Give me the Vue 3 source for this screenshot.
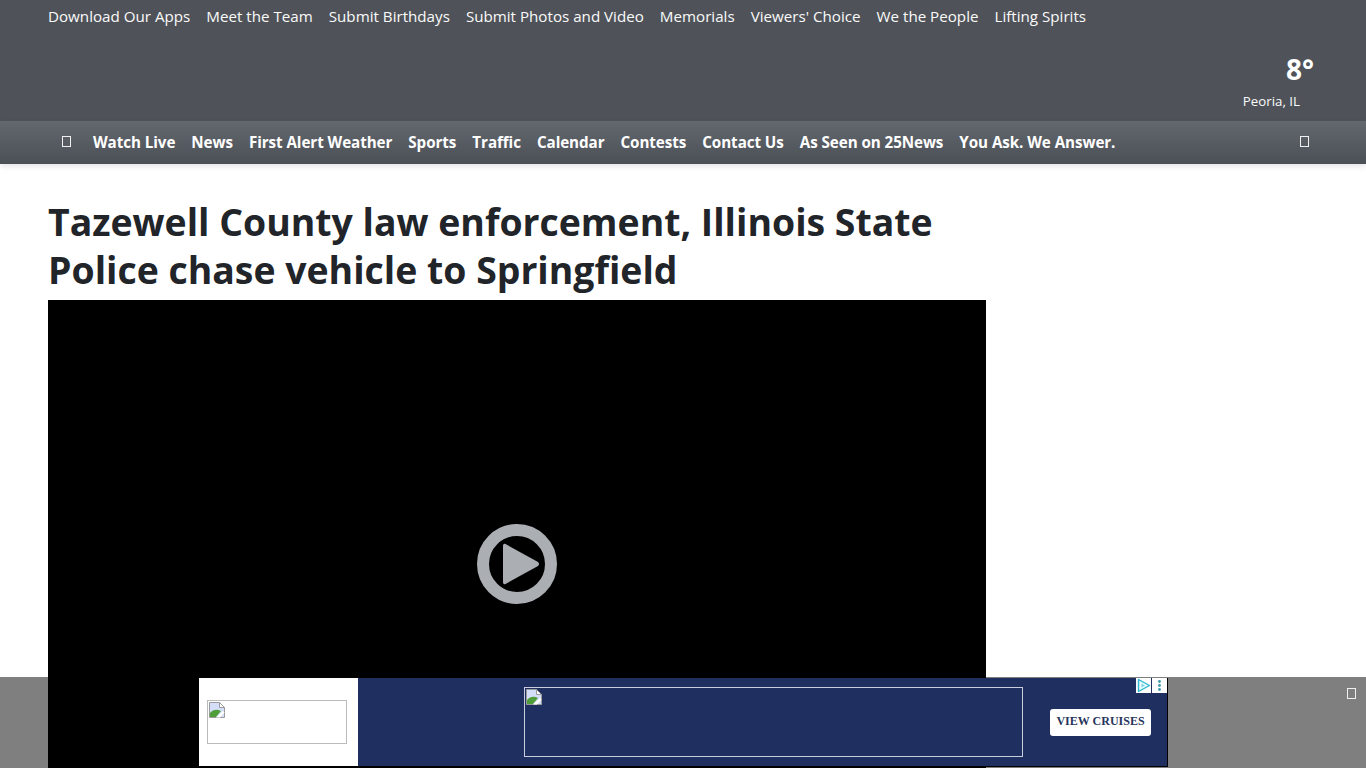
<script setup>
const topLinks = ['Download Our Apps', 'Meet the Team', 'Submit Birthdays', 'Submit Photos and Video', 'Memorials', "Viewers' Choice", 'We the People', 'Lifting Spirits']
const navLinks = ['Watch Live', 'News', 'First Alert Weather', 'Sports', 'Traffic', 'Calendar', 'Contests', 'Contact Us', 'As Seen on 25News', 'You Ask. We Answer.']
</script>

<template>
  <div class="page">
    <header class="masthead">
      <nav class="top-links">
        <a v-for="l in topLinks" :key="l">{{ l }}</a>
      </nav>
      <div class="weather">
        <div class="temp">8°</div>
        <div class="city">Peoria, IL</div>
      </div>
    </header>
    <nav class="mainnav">
      <span class="tofu menu-tofu"></span>
      <a v-for="l in navLinks" :key="l">{{ l }}</a>
      <span class="tofu search-tofu"></span>
    </nav>
    <main class="content">
      <h1>Tazewell County law enforcement, Illinois State Police chase vehicle to Springfield</h1>
      <div class="video">
        <svg class="play" width="80" height="80" viewBox="0 0 80 80">
          <circle cx="40" cy="40" r="34" fill="none" stroke="#abaeb3" stroke-width="12" />
          <path d="M28.5 20 L61 38 Q63 40 61 42 L28.5 60 Q26 61 26 58 L26 22 Q26 19 28.5 20 Z" fill="#abaeb3" />
        </svg>
      </div>
    </main>
    <aside class="adbar">
      <div class="ad">
        <div class="ad-left">
          <div class="ph ph-logo">
            <svg class="broken" width="16" height="16" viewBox="0 0 16 16">
              <path d="M0.5 0.5H10.5L15.5 5.5V15.5H0.5Z" fill="#d4def8" stroke="#9a9a9a" />
              <path d="M10.5 0.5V5.5H15.5Z" fill="#fff" stroke="#9a9a9a" />
              <path d="M1 15V11C4 7.5 8 7 12 9L7 15Z" fill="#4f9e3a" />
              <path d="M7 15.5L14 9L15.5 10.5L11 15.5Z" fill="#fff" />
            </svg>
          </div>
        </div>
        <div class="ad-right">
          <div class="ph ph-main">
            <svg class="broken" width="16" height="16" viewBox="0 0 16 16">
              <path d="M0.5 0.5H10.5L15.5 5.5V15.5H0.5Z" fill="#d4def8" stroke="#9a9a9a" />
              <path d="M10.5 0.5V5.5H15.5Z" fill="#fff" stroke="#9a9a9a" />
              <path d="M1 15V11C4 7.5 8 7 12 9L7 15Z" fill="#4f9e3a" />
              <path d="M7 15.5L14 9L15.5 10.5L11 15.5Z" fill="#fff" />
            </svg>
          </div>
          <div class="cta">VIEW CRUISES</div>
        </div>
        <div class="adchoices">
          <span class="ac-box">
            <svg width="15" height="15" viewBox="0 0 15 15">
              <path d="M2.5 1.5 L13.5 7.5 L2.5 13.5 Z" fill="#e6fbfe" stroke="#2fb5d2" stroke-width="1.4" stroke-linejoin="round" />
              <path d="M5.5 5.5 L9 7.5 L5.5 9.5 Z" fill="#7fd4e4" />
            </svg>
          </span>
          <span class="ac-box">
            <svg width="15" height="15" viewBox="0 0 15 15">
              <circle cx="7.5" cy="3.5" r="1.4" fill="#3d9aa8" />
              <circle cx="7.5" cy="7.5" r="1.4" fill="#3d9aa8" />
              <circle cx="7.5" cy="11.5" r="1.4" fill="#3d9aa8" />
            </svg>
          </span>
        </div>
      </div>
      <span class="tofu ad-close"></span>
    </aside>
  </div>
</template>

<style>
html, body { margin: 0; overflow: hidden; background: #fff; }
</style>

<style scoped>
.page {
  height: 768px;
  overflow: hidden;
  font-family: "Open Sans", "Noto Sans", sans-serif;
  color: #212529;
}
.masthead {
  height: 121px;
  box-sizing: border-box;
  background: #4f5359;
  padding: 0 52px 0 48px;
  color: #fff;
  display: flex;
  flex-direction: column;
  justify-content: space-between;
}
.top-links {
  display: flex;
  gap: 16px;
  padding-top: 4px;
  font-size: 15.17px;
  line-height: 24px;
  color: #fafafa;
}
.weather {
  align-self: flex-end;
  width: 70px;
  display: flex;
  flex-direction: column;
  align-items: flex-end;
  padding-bottom: 10px;
}
.temp {
  font-size: 28px;
  line-height: 34px;
  font-weight: 700;
}
.city {
  font-size: 13.3px;
  line-height: 20px;
  margin-top: 5px;
  margin-right: 14px;
  white-space: nowrap;
  color: #fafafa;
}
.mainnav {
  height: 43px;
  box-sizing: border-box;
  padding: 0 0 2px 62px;
  background: linear-gradient(#63676e, #4b4f56);
  display: flex;
  align-items: center;
  gap: 16px;
  color: #fff;
  font-weight: 700;
  font-size: 15.2px;
  letter-spacing: -0.07px;
  box-shadow: 0 2px 6px rgba(0, 0, 0, 0.12);
  position: relative;
}
.tofu {
  display: inline-block;
  box-sizing: border-box;
  width: 9px;
  height: 11px;
  border: 1px solid #f0f0f0;
}
.menu-tofu { margin-right: 6px; }
.search-tofu {
  position: absolute;
  left: 1300px;
  top: 15px;
}
.content {
  padding: 34px 380px 0 48px;
}
h1 {
  margin: 0 0 6px;
  font-size: 37.4px;
  line-height: 48px;
  font-weight: 700;
  color: #212529;
}
.video {
  width: 938px;
  height: 528px;
  background: #000;
  display: flex;
  align-items: center;
  justify-content: center;
}
.adbar {
  position: fixed;
  left: 0;
  right: 0;
  bottom: 0;
  height: 91px;
  background: rgba(0, 0, 0, 0.5);
  display: flex;
  justify-content: center;
}
.ad {
  position: relative;
  width: 968px;
  height: 88px;
  margin-top: 1px;
  margin-left: 1px;
  border: 1px solid #000;
  border-width: 0 1px 1px 0;
  display: flex;
  background: #1f2f5f;
}
.ad-left {
  width: 159px;
  box-sizing: border-box;
  padding-left: 8px;
  background: #fff;
  display: flex;
  align-items: center;
}
.ad-right {
  flex: 1;
  display: flex;
  align-items: center;
  padding-left: 166px;
}
.ph {
  box-sizing: border-box;
  position: relative;
  border: 1px solid;
}
.ph-logo {
  width: 140px;
  height: 44px;
  border-color: #bbb;
}
.ph-main {
  width: 499px;
  height: 70px;
  border-color: #c9cedf;
}
.broken {
  position: absolute;
  left: 1px;
  top: 1px;
}
.cta {
  margin-left: 27px;
  width: 101px;
  height: 27px;
  box-sizing: border-box;
  padding-bottom: 1px;
  background: #fff;
  border-radius: 3px;
  color: #27345c;
  font-family: "Liberation Serif", serif;
  font-weight: 700;
  font-size: 12px;
  display: flex;
  align-items: center;
  justify-content: center;
}
.adchoices {
  position: absolute;
  top: 0;
  right: 0;
  display: flex;
  gap: 1px;
}
.ac-box {
  width: 15px;
  height: 15px;
  background: #fff;
  display: block;
}
.ac-box svg { display: block; }
.ad-close {
  position: absolute;
  left: 1347px;
  top: 11px;
}
</style>
